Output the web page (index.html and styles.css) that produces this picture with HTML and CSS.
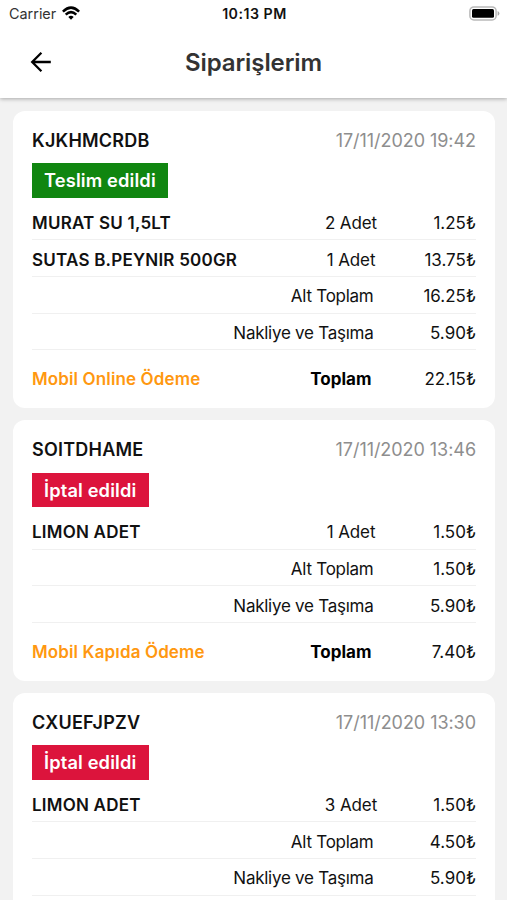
FILE: index.html
```html
<!DOCTYPE html>
<html lang="tr">
<head>
<meta charset="utf-8">
<title>Siparişlerim</title>
<link rel="stylesheet" href="styles.css">
</head>
<body>
<header class="top">
  <div class="status">
    <div class="carrier"><span class="carrier-name">Carrier</span>
      <svg class="wifi" viewBox="0 0 18 14" width="18" height="14"><path d="M9 13.8 L6.3 11 Q9 8.7 11.7 11 Z"/><path d="M.9 5.6 Q9-2.3 17.1 5.6M3.7 8.7 Q9 3.6 14.3 8.7" fill="none" stroke="#000" stroke-width="2.5"/></svg>
    </div>
    <div class="clock">10:13 PM</div>
    <svg class="battery" viewBox="0 0 31 15" width="31" height="15"><rect x=".9" y=".9" width="26.2" height="13" rx="4" fill="#fff" stroke="#b9b9b9" stroke-width="1.5"/><rect x="3" y="3" width="22" height="8.8" rx="1.5"/><path d="M28.6 5 Q30.4 5.8 30.4 7.4 T28.6 9.8Z" fill="#aaa"/></svg>
  </div>
  <div class="nav">
    <svg class="back" viewBox="0 0 22 22" width="22" height="22"><path d="M11.4 1.8 L2.2 11 L11.4 20.2 M2.2 11 H20.8" fill="none" stroke="#000" stroke-width="2.3"/></svg>
    <h1 class="title">Siparişlerim</h1>
  </div>
</header>
<main class="orders">
  <article class="card">
    <div class="head"><span class="code">KJKHMCRDB</span><time class="date">17/11/2020 19:42</time></div>
    <div class="badge delivered">Teslim edildi</div>
    <div class="row"><span class="name">MURAT SU 1,5LT</span><span class="qty">2 Adet</span><span class="price">1.25₺</span></div>
    <div class="row"><span class="name">SUTAS B.PEYNIR 500GR</span><span class="qty">1 Adet</span><span class="price">13.75₺</span></div>
    <div class="row"><span class="label">Alt Toplam</span><span class="price">16.25₺</span></div>
    <div class="row"><span class="label">Nakliye ve Taşıma</span><span class="price">5.90₺</span></div>
    <div class="total"><span class="method">Mobil Online Ödeme</span><span class="sum">Toplam</span><span class="price">22.15₺</span></div>
  </article>
  <article class="card">
    <div class="head"><span class="code">SOITDHAME</span><time class="date">17/11/2020 13:46</time></div>
    <div class="badge cancelled">İptal edildi</div>
    <div class="row"><span class="name">LIMON ADET</span><span class="qty">1 Adet</span><span class="price">1.50₺</span></div>
    <div class="row"><span class="label">Alt Toplam</span><span class="price">1.50₺</span></div>
    <div class="row"><span class="label">Nakliye ve Taşıma</span><span class="price">5.90₺</span></div>
    <div class="total"><span class="method">Mobil Kapıda Ödeme</span><span class="sum">Toplam</span><span class="price">7.40₺</span></div>
  </article>
  <article class="card continues">
    <div class="head"><span class="code">CXUEFJPZV</span><time class="date">17/11/2020 13:30</time></div>
    <div class="badge cancelled">İptal edildi</div>
    <div class="row"><span class="name">LIMON ADET</span><span class="qty">3 Adet</span><span class="price">1.50₺</span></div>
    <div class="row"><span class="label">Alt Toplam</span><span class="price">4.50₺</span></div>
    <div class="row"><span class="label">Nakliye ve Taşıma</span><span class="price">5.90₺</span></div>
  </article>
</main>
</body>
</html>
```
FILE: styles.css
```css
* { box-sizing: border-box; }
body {
  margin: 0;
  height: 900px;
  overflow: hidden;
  display: flex;
  flex-direction: column;
  background: #f2f2f2;
  color: #111;
  font-family: Inter, "Liberation Sans", sans-serif;
  font-size: 17px;
  white-space: nowrap;
}
.top {
  position: relative;
  z-index: 1;
  flex: none;
  height: 98px;
  background: #fff;
  box-shadow: 0 1px 4px rgba(0, 0, 0, .3);
}
.status {
  display: grid;
  grid-template-columns: 1fr auto 1fr;
  align-items: center;
  height: 27px;
  padding: 0 7px 0 9px;
}
.carrier { display: flex; align-items: center; gap: 6px; font-size: 14.4px; color: #333; }
.wifi { margin-top: -2px; }
.clock { font-size: 14.2px; font-weight: 600; letter-spacing: .5px; }
.battery { justify-self: end; margin-top: -1px; }
.nav {
  display: grid;
  grid-template-columns: 1fr auto 1fr;
  align-items: center;
  height: 70px;
  padding: 0 30px;
}
.title { margin: 0; font-size: 24px; font-weight: 600; letter-spacing: -.1px; color: #333; }
.orders {
  flex: 1;
  min-height: 0;
  overflow: hidden;
  display: flex;
  flex-direction: column;
  gap: 12px;
  padding: 12.6px 12px 0 13px;
}
.card { flex: none; padding: 0 19px; background: #fff; border-radius: 12px; }
.continues { flex: 1; border-radius: 12px 12px 0 0; }
.head {
  display: flex;
  justify-content: space-between;
  align-items: center;
  height: 52.8px;
  padding-top: 7px;
}
.code { font-size: 18px; font-weight: 600; letter-spacing: .22px; }
.date { font-size: 18px; letter-spacing: -.05px; color: #8e8e8e; }
.badge {
  width: fit-content;
  height: 34.4px;
  margin: 0 0 6.1px -.5px;
  padding: 0 12.5px;
  line-height: 34.4px;
  font-size: 18.3px;
  font-weight: 600;
  letter-spacing: .13px;
  color: #fff;
}
.delivered { background: #108610; }
.cancelled { background: #dc143c; }
.row, .total { display: flex; align-items: center; }
.row { height: 36.6px; padding-top: 2.8px; border-bottom: 1px solid #f0f0f0; }
.total { height: 57.6px; }
.name, .method { flex: 1; font-weight: 600; }
.name { letter-spacing: .22px; }
.method { letter-spacing: .13px; color: #ff9810; }
.qty { width: 70px; text-align: center; letter-spacing: -.1px; }
.label { flex: 1; text-align: right; letter-spacing: -.26px; }
.sum { font-weight: 700; color: #000; margin-right: 2px; }
.price { width: 90px; text-align: right; }
.label + .price, .sum + .price { width: 102.5px; }
```
